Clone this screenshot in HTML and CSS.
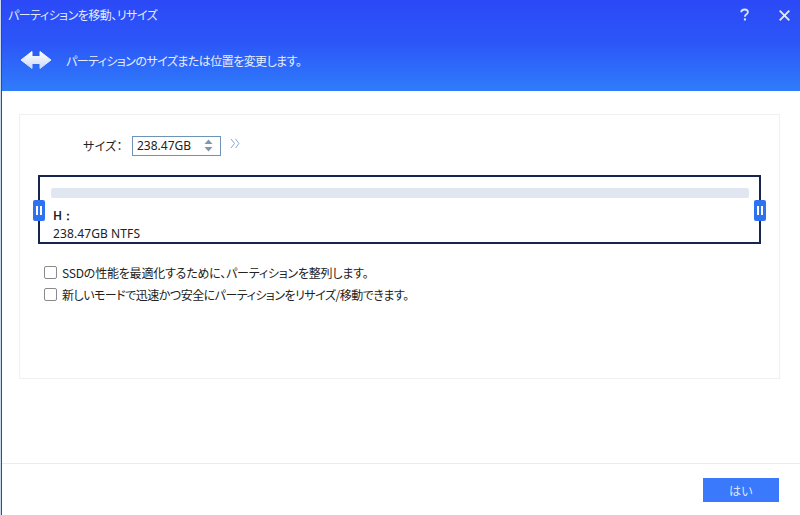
FILE: index.html
```html
<!DOCTYPE html>
<html lang="ja">
<head>
<meta charset="utf-8">
<title>パーティションを移動、リサイズ</title>
<link rel="stylesheet" href="styles.css">
</head>
<body>
<div class="window">
  <header class="header">
    <div class="titlebar">
      <span class="title">パーティションを移動、リサイズ</span>
      <div class="controls">
        <svg class="ctl" width="10" height="14" viewBox="0 0 10 14"><path d="M1.200 4.200C1.300 2.400 2.700 1.500 4.700 1.500c1.900 0 3.200 1 3.200 2.600 0 1.300-.8 1.900-1.700 2.500-.9.600-1.300 1-1.300 2.100" fill="none" stroke="#dfe6ff" stroke-width="1.800"/><rect x="3.900" y="10.300" width="2" height="2.200" fill="#dfe6ff"/></svg>
        <svg class="ctl" width="11" height="11" viewBox="0 0 11 11"><path d="M.7.7l9.600 9.600M10.300.7L.7 10.300" fill="none" stroke="#dfe6ff" stroke-width="1.900"/></svg>
      </div>
    </div>
    <div class="subtitle">
      <svg class="arrows" width="32" height="20" viewBox="0 0 32 20"><defs><linearGradient id="ag" x1="0" y1="0" x2="0" y2="1"><stop offset="0" stop-color="#ffffff"/><stop offset="1" stop-color="#c9d9f5"/></linearGradient></defs><path d="M1 10L12 1.500V6.500h8V1.500L31 10l-11 8.500V13.500h-8v5z" fill="url(#ag)" stroke="url(#ag)" stroke-width="1" stroke-linejoin="round"/></svg>
      <span class="subtitle-text">パーティションのサイズまたは位置を変更します。</span>
    </div>
  </header>
  <main class="main">
    <section class="card">
      <div class="size-row">
        <span class="size-label">サイズ：</span>
        <div class="spin">
          <span>238.47GB</span>
          <svg width="9" height="13" viewBox="0 0 9 13"><path d="M4.500.5L8.500 5H.5zM.5 8h8l-4 4.500z" fill="#7f97ad"/></svg>
        </div>
        <svg class="chev" width="10" height="11" viewBox="0 0 10 11"><path d="M1 1l3.500 4.500L1 10M5.500 1L9 5.500 5.500 10" fill="none" stroke="#8aa8cf" stroke-width="1"/></svg>
      </div>
      <div class="partition">
        <div class="bar"></div>
        <div class="drive">H：</div>
        <div class="info">238.47GB NTFS</div>
        <div class="handle handle-left"><i></i><i></i></div>
        <div class="handle handle-right"><i></i><i></i></div>
      </div>
      <label class="check check-first"><span class="box"></span>SSDの性能を最適化するために、パーティションを整列します。</label>
      <label class="check check-second"><span class="box"></span>新しいモードで迅速かつ安全にパーティションをリサイズ/移動できます。</label>
    </section>
  </main>
  <footer class="footer">
    <button class="ok">はい</button>
  </footer>
</div>
</body>
</html>
```
FILE: styles.css
```css
* { box-sizing: border-box; }
html, body { margin: 0; padding: 0; }
body {
  width: 800px;
  height: 515px;
  overflow: hidden;
  padding-left: 1px;
  background: #c9d8ec;
  font-family: "Noto Sans CJK JP", "Noto Sans", sans-serif;
  font-feature-settings: "palt";
  font-size: 12px;
  color: #222;
}
.window {
  width: 799px;
  height: 515px;
  display: flex;
  flex-direction: column;
  border-left: 1px solid #1d5a78;
  background: #fff;
}
.header {
  height: 91px;
  flex: none;
  background: linear-gradient(#2b49f6 0%, #2c55f8 45%, #2f7cfb 100%);
  color: #e8eeff;
  padding: 0 0 0 6px;
}
.titlebar {
  height: 28px;
  display: flex;
  align-items: center;
  justify-content: space-between;
  padding-right: 10px;
}
.title { font-size: 12px; color: #e4eaff; letter-spacing: -0.5px; }
.controls { display: flex; align-items: center; gap: 29px; padding-top: 2px; }
.subtitle {
  display: flex;
  align-items: center;
  gap: 14px;
  margin-top: 22px;
  padding-left: 12px;
  font-size: 12px;
}
.subtitle-text { letter-spacing: -0.55px; }
.main { flex: 1; padding: 23px 20px 84px 17px; }
.card {
  height: 265px;
  border: 1px solid #f0f0f0;
  padding: 20px 18px 0 18px;
}
.size-row {
  display: flex;
  align-items: center;
  height: 21px;
  padding-left: 45px;
}
.size-label { width: 49px; font-size: 12px; letter-spacing: 0.3px; }
.spin {
  width: 89px;
  height: 20px;
  border: 1px solid #6d93b8;
  display: flex;
  align-items: center;
  justify-content: space-between;
  padding: 0 7px 0 4px;
  font-family: "Noto Sans", sans-serif;
  font-size: 12px;
}
.chev { margin-left: 9px; margin-top: -4px; }
.partition {
  position: relative;
  height: 69px;
  margin-top: 19px;
  border: 2px solid #17244f;
  padding: 11px 10px 0 11px;
  font-family: "Noto Sans", sans-serif;
  font-size: 12px;
  line-height: 17px;
}
.bar { height: 10px; background: #e0e7f1; border-radius: 2px; }
.drive { margin-top: 9px; padding-left: 2px; font-weight: 600; }
.info { margin-top: 1px; padding-left: 2px; letter-spacing: 0.1px; }
.handle {
  position: absolute;
  top: 23px;
  width: 12px;
  height: 21px;
  background: #2f72f0;
  border-radius: 2px;
  display: flex;
  align-items: center;
  justify-content: center;
  gap: 2px;
}
.handle i { width: 2px; height: 9px; background: #fff; }
.handle-left { left: -7px; }
.handle-right { right: -7px; }
.check {
  display: flex;
  align-items: center;
  height: 22px;
  padding-left: 6px;
  font-size: 12px;
}
.check-first { letter-spacing: -0.2px; }
.check-second { letter-spacing: -0.5px; }
.partition + .check { margin-top: 17px; }
.box {
  width: 13px;
  height: 13px;
  border: 1px solid #8a8a8a;
  border-radius: 2px;
  margin-right: 5px;
  background: #fff;
  flex: none;
}
.footer {
  height: 53px;
  flex: none;
  border-top: 1px solid #ececec;
  display: flex;
  justify-content: flex-end;
  padding: 14px 21px 0 0;
}
.ok {
  width: 76px;
  height: 24px;
  background: #3a78fc;
  color: #dce6ff;
  border: 0;
  padding: 0;
  font-family: inherit;
  font-size: 12px;
}
```
